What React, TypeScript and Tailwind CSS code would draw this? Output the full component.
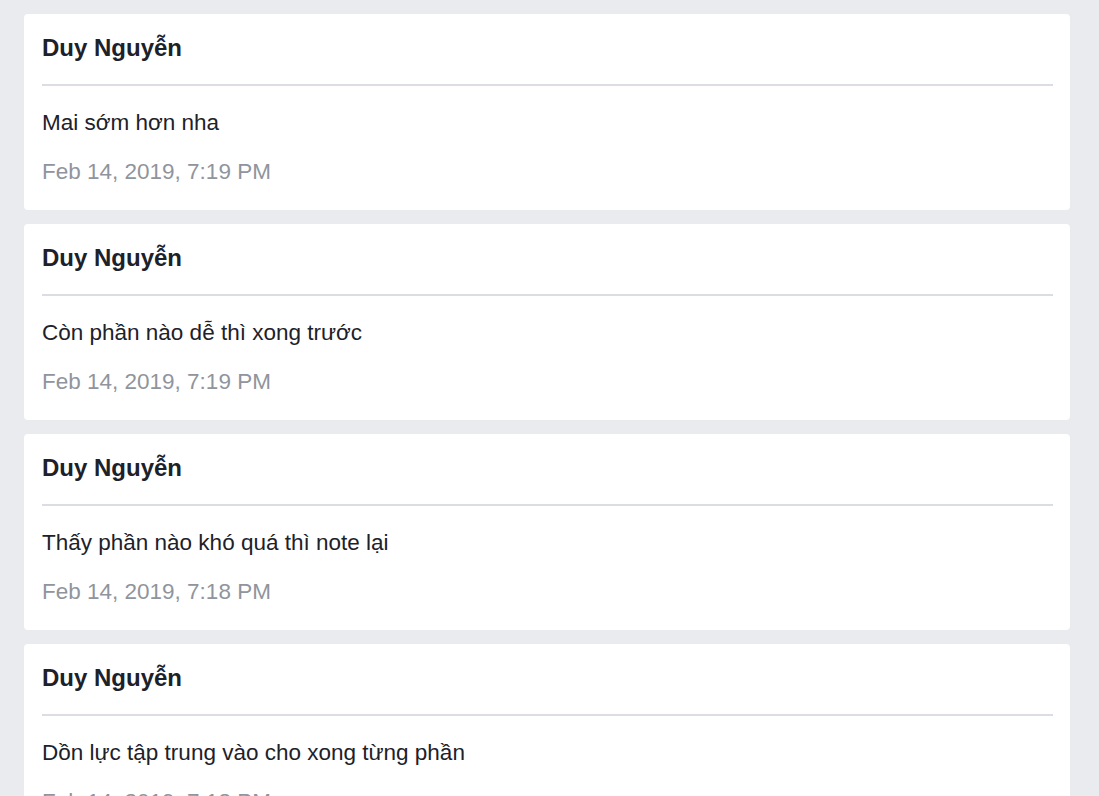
import React from 'react';

interface Message {
  author: string;
  text: string;
  time: string;
}

const messages: Message[] = [
  { author: 'Duy Nguyễn', text: 'Mai sớm hơn nha', time: 'Feb 14, 2019, 7:19 PM' },
  { author: 'Duy Nguyễn', text: 'Còn phần nào dễ thì xong trước', time: 'Feb 14, 2019, 7:19 PM' },
  { author: 'Duy Nguyễn', text: 'Thấy phần nào khó quá thì note lại', time: 'Feb 14, 2019, 7:18 PM' },
  { author: 'Duy Nguyễn', text: 'Dồn lực tập trung vào cho xong từng phần', time: 'Feb 14, 2019, 7:18 PM' },
];

function MessageCard({ message }: { message: Message }): JSX.Element {
  return (
    <div className="bg-white rounded-[4px] pl-[18px] pr-[17px] pt-[16px] pb-[22px]">
      <div className="text-[24px] leading-[36px] font-bold text-[#1d2129]">{message.author}</div>
      <div className="h-[2px] bg-[#dadde1] mt-[18px]" />
      <div className="text-[22.5px] leading-[32px] text-[#1d2129] mt-[21px]">{message.text}</div>
      <div className="text-[22.5px] leading-[32px] text-[#90949c] mt-[17px]">{message.time}</div>
    </div>
  );
}

export default function App(): JSX.Element {
  return (
    <div
      className="h-[796px] overflow-hidden bg-[#e9ebee] pl-[24px] pr-[29px] pt-[14px]"
      style={{ fontFamily: '"Liberation Sans", Arial, sans-serif' }}
    >
      <div className="flex flex-col gap-[14px]">
        {messages.map((m, i) => (
          <MessageCard key={i} message={m} />
        ))}
      </div>
    </div>
  );
}
